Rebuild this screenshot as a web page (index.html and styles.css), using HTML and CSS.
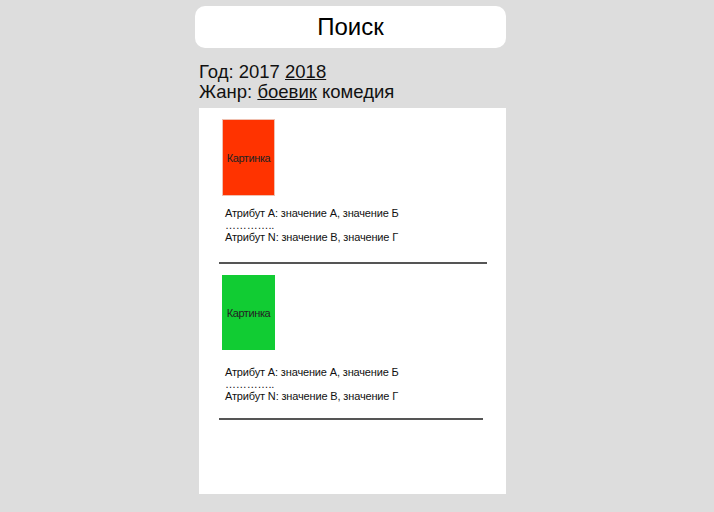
FILE: index.html
```html
<!DOCTYPE html>
<html lang="ru">
<head>
<meta charset="utf-8">
<title>Поиск</title>
<link rel="stylesheet" href="styles.css">
</head>
<body>
<div class="page">
  <div class="search">Поиск</div>
  <div class="filters">
    <div>Год: 2017 <a href="#">2018</a></div>
    <div>Жанр: <a href="#">боевик</a> комедия</div>
  </div>
  <div class="results">
    <div class="item">
      <div class="pic pic-red">Картинка</div>
      <div class="attrs">
        <div>Атрибут A: значение А, значение Б</div>
        <div>…………..</div>
        <div>Атрибут N: значение В, значение Г</div>
      </div>
      <hr class="sep sep-wide">
    </div>
    <div class="item item-second">
      <div class="pic pic-green">Картинка</div>
      <div class="attrs">
        <div>Атрибут A: значение А, значение Б</div>
        <div>…………..</div>
        <div>Атрибут N: значение В, значение Г</div>
      </div>
      <hr class="sep sep-narrow">
    </div>
  </div>
</div>
</body>
</html>
```

FILE: styles.css
```css
html, body {
  margin: 0;
  padding: 0;
  background: #dddddd;
  font-family: "Liberation Sans", Arial, sans-serif;
  color: #111;
}
.page {
  margin-left: 195px;
  width: 311px;
  padding-top: 6px;
}
.search {
  height: 42px;
  line-height: 42px;
  background: #fff;
  border-radius: 10px;
  text-align: center;
  font-size: 24px;
  color: #000;
}
.filters {
  margin-top: 14px;
  padding-left: 4px;
  font-size: 18.5px;
  line-height: 20px;
}
.filters a {
  color: #111;
  text-decoration: underline;
}
.results {
  margin-top: 6px;
  margin-left: 4px;
  width: 307px;
  height: 386px;
  background: #fff;
  padding-top: 11px;
  box-sizing: border-box;
}
.item {
  padding-left: 20px;
}
.pic {
  margin-left: 3px;
  width: 53px;
  height: 77px;
  box-sizing: border-box;
  display: flex;
  align-items: center;
  justify-content: center;
  font-size: 11px;
  letter-spacing: -0.4px;
  color: #222;
}
.pic-red {
  background: #ff3300;
  border: 1px solid #f0c0b0;
}
.pic-green {
  background: #11cc33;
  height: 75px;
}
.attrs {
  margin-top: 11px;
  margin-left: 6px;
  font-size: 11px;
  letter-spacing: -0.15px;
  line-height: 12px;
}
.item-second .attrs {
  margin-top: 16px;
}
.sep {
  margin: 19px 0 11px 0;
  height: 0;
  border: 0;
  border-top: 2px solid #555;
}
.sep-wide {
  width: 268px;
}
.sep-narrow {
  width: 264px;
  margin-top: 16px;
}
```
